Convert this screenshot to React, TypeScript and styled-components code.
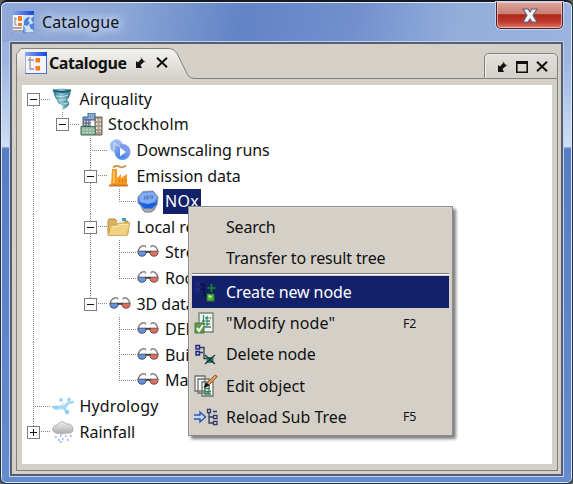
import React from "react";
import styled, { createGlobalStyle, css } from "styled-components";

const Global = createGlobalStyle`
  * { box-sizing: border-box; }
  body { margin: 0; background: #5c615f; overflow: hidden; font-family: "Noto Sans", "Open Sans", sans-serif; font-size: 16px; color: #111; }
  svg { display: block; flex: none; }
`;

const Window = styled.div`
  position: relative;
  width: 573px;
  height: 484px;
  padding: 2px 9px 7px 9px;
  display: flex;
  flex-direction: column;
  border: 1px solid #27303e;
  border-top: 2px solid #16191f;
  border-radius: 7px 7px 6px 6px;
  background: linear-gradient(100deg, #91a9d7 0%, #8ba5d6 22%, #6283c5 42%, #7390cd 62%, #94aedb 80%, #9ab4df 100%) 0 0 / 100% 40px no-repeat,
    linear-gradient(180deg, #95aedb 0%, #9db5df 12%, #cfdef4 30%, #577dc4 30.5%, #648bcd 100%);
  box-shadow: inset 0 0 0 1px #d9e8fa;
`;

const TitleBar = styled.div`
  height: 38px;
  flex: none;
  display: flex;
  align-items: flex-start;
  padding-left: 2px;
`;

const TitleIcon = styled.div`
  margin-top: 7px;
`;

const Title = styled.div`
  margin: 7px 0 0 8px;
  line-height: 22px;
  letter-spacing: 0.12px;
  text-shadow: 0 0 8px #c8d8f2, 0 0 8px #c8d8f2, 0 0 12px #c8d8f2, 0 0 14px #c8d8f2;
`;

const CloseButton = styled.button`
  margin: -2px 0 0 auto;
  width: 67px;
  height: 27px;
  padding: 0;
  display: flex;
  align-items: center;
  justify-content: center;
  border: 1px solid #4b2029;
  border-top: 0;
  border-radius: 0 0 5px 5px;
  background: linear-gradient(180deg, #dba79e 0%, #cb7d72 45%, #ae251c 49%, #bd392e 75%, #df7866 100%);
  box-shadow: inset 0 0 0 1px rgba(255, 220, 210, 0.65), 0 0 0 1px #c3d5f1;
`;

const Client = styled.div`
  flex: 1;
  min-height: 0;
  padding: 4px 3px 3px 4px;
  border: 2px solid #565e70;
  outline: 1px solid #bdd2ef;
  display: flex;
  flex-direction: column;
  background: #d4d0c8;
`;

const TabStrip = styled.div`
  height: 31px;
  flex: none;
  display: flex;
  justify-content: space-between;
`;

const Tab = styled.div`
  width: 180px;
  display: grid;
  & > * { grid-area: 1 / 1; }
`;

const TabContent = styled.div`
  z-index: 1;
  display: flex;
  align-items: center;
  padding: 0 0 2px 9px;
`;

const TabLabel = styled.span`
  font-weight: 700;
  line-height: 22px;
  width: 79px;
  margin: 0 7px 0 2px;
  letter-spacing: -0.4px;
  white-space: nowrap;
`;

const TabFill = styled.div`
  flex: 1;
  border-bottom: 1px solid #808080;
`;

const TabTools = styled.div`
  margin-top: 5px;
  width: 74px;
  border: 1px solid #808080;
  border-radius: 5px 5px 0 0;
  background: linear-gradient(#e2e0dc, #d4d0c8);
  box-shadow: inset 1px 1px 0 #efedea;
  display: flex;
  align-items: center;
  justify-content: space-between;
  padding: 1px 9px 0 12px;
`;

const TabButtonGap = styled.span`
  width: 10px;
  flex: none;
`;

const TabBody = styled.div`
  flex: 1;
  min-height: 0;
  padding: 6px 5px 6px 5px;
  border: 1px solid #808080;
  border-top: 0;
  display: flex;
`;

const Tree = styled.div`
  flex: 1;
  background: #fff;
  padding-top: 1.5px;
`;

const TreeRow = styled.div`
  height: 25.6px;
  display: flex;
  align-items: center;
`;

type Guide = "blank" | "line" | "tee" | "elbow" | "first" | "boxMid" | "boxLast";

const vdots = "repeating-linear-gradient(180deg, #858585 0 1px, #fff 1px 2px)";
const hdots = "repeating-linear-gradient(90deg, #858585 0 1px, #fff 1px 2px)";
const guides: Record<Guide, string> = {
  blank: "none",
  line: `${vdots} 11px 0 / 1px 100% no-repeat`,
  tee: `${vdots} 11px 0 / 1px 100% no-repeat, ${hdots} 11px 12px / 18px 1px no-repeat`,
  elbow: `${vdots} 11px 0 / 1px 13px no-repeat, ${hdots} 11px 12px / 18px 1px no-repeat`,
  first: `${vdots} 11px 13px / 1px 100% no-repeat, ${hdots} 11px 12px / 17px 1px no-repeat`,
  boxMid: `${vdots} 11px 0 / 1px 100% no-repeat, ${hdots} 11px 12px / 17px 1px no-repeat`,
  boxLast: `${vdots} 11px 0 / 1px 13px no-repeat, ${hdots} 11px 12px / 17px 1px no-repeat`,
};

const GuideCell = styled.div<{ $kind: Guide }>`
  width: 28.5px;
  height: 100%;
  flex: none;
  display: flex;
  align-items: center;
  padding-left: 5px;
  background: ${(p) => guides[p.$kind]};
`;

const Expander = styled.div<{ $open: boolean }>`
  width: 13px;
  height: 13px;
  border: 1px solid #7d7d7d;
  background: ${(p) =>
    `linear-gradient(#111, #111) 2px 5px / 7px 1.4px no-repeat, ${
      p.$open ? "" : "linear-gradient(#111, #111) 5px 2px / 1.4px 7px no-repeat, "
    }#fff`};
`;

const NodeIcon = styled.div`
  width: 28px;
  flex: none;
  display: flex;
  padding-left: 1px;
`;

const NodeLabel = styled.span<{ $selected?: boolean; $track: number }>`
  line-height: 25px;
  white-space: nowrap;
  letter-spacing: ${(p) => p.$track}px;
  margin-left: -1px;
  padding: 0 2px;
  ${(p) =>
    p.$selected &&
    css`
      background: #13216b;
      color: #fff;
    `}
`;

const Menu = styled.div`
  position: absolute;
  left: 187px;
  top: 204px;
  width: 265px;
  height: 230px;
  padding: 4px 3px 0 3px;
  border: 1px solid #8a8a86;
  background: #d4d0c8;
  box-shadow: inset 1px 1px 0 #dedbd5, 3px 3px 3px rgba(0, 0, 0, 0.5);
`;

const MenuItem = styled.div<{ $active?: boolean }>`
  height: 31.2px;
  display: grid;
  grid-template-columns: 34px 177px 1fr;
  align-items: center;
  background: ${(p) => (p.$active ? "#13216b" : "transparent")};
  color: ${(p) => (p.$active ? "#fff" : "#111")};
`;

const MenuIcon = styled.div`
  padding-left: 2px;
`;

const MenuLabel = styled.span<{ $track: number }>`
  white-space: nowrap;
  letter-spacing: ${(p) => p.$track}px;
`;

const Shortcut = styled.span`
  font-size: 12.5px;
  letter-spacing: -0.3px;
`;

const Separator = styled.div`
  height: 2px;
  margin: 0 0 1px;
  border-top: 1px solid #808080;
  border-bottom: 1px solid #fff;
`;

const CatalogueIcon = ({ world = false }: { world?: boolean }) => (
  <svg width="22" height="22" viewBox="0 0 22 22">
    <defs>
      <linearGradient id="cap"><stop stopColor="#8ca5ed" /><stop offset="1" stopColor="#1546df" /></linearGradient>
    </defs>
    <path d="M0 0H22V22H0Z" fill="#f4f3fa" />
    <path d="M0 0H22V4H0Z" fill="url(#cap)" />
    {world ? (
      <>
        <path d="M3 6v8h2M3 8h2" fill="none" stroke="#979797" strokeWidth="1.2" />
        <path d="M6 5h4v5H6zM6 12h4v3H6z" fill="#f57b1c" />
        <rect x="11" y="4" width="11" height="18" fill="#cfe0f7" />
        <path d="M12 10q2-4 6-4l-2 4 2 2-3 3-3-1zM19 7l3-1v4l-2 1zM17 14l5-2v7l-3-1z" fill="#4a83d6" />
        <path d="M11 14l3 4-1 4h-2z" fill="#78a4e4" />
        <path d="M1 17h9M1 20h11" stroke="#555a68" strokeWidth="1.2" />
      </>
    ) : (
      <>
        <path d="M3 8h6M5 5v12h4" fill="none" stroke="#979797" strokeWidth="1.3" />
        <path d="M10.500 6h4.500v4.500h-4.500zM10.500 14h4.500v4.500h-4.500z" fill="#f57b1c" />
      </>
    )}
    <path d="M.5 4V22" stroke="#a3afe1" />
    <path d="M21.5 4v18M0 21.5h22" stroke="#4a6bd0" strokeWidth={world ? 0.5 : 1} />
  </svg>
);

const PinIcon = () => (
  <svg width="11" height="12" viewBox="0 0 11 12">
    <path d="M1 4l2 1.500 3.500-4 3 3-4 3.500 1.500 3H1z" fill="#111" />
    <path d="M6 .5l2 3 2.500 1.500" fill="none" stroke="#666" />
  </svg>
);

const CrossIcon = () => (
  <svg width="12" height="11" viewBox="0 0 12 11">
    <path d="M1 .8l10 9.4M11 .8L1 10.2" stroke="#111" strokeWidth="2" />
  </svg>
);

const MaximizeIcon = () => (
  <svg width="12" height="12" viewBox="0 0 12 12">
    <path d="M.8 1h10.400v10.200H.8z" fill="none" stroke="#111" strokeWidth="1.600" />
    <path d="M0 1.500h12" stroke="#111" strokeWidth="3" />
  </svg>
);

const CloseGlyph = () => (
  <svg width="16" height="15" viewBox="0 0 16 15">
    <path d="M1 1h5l2 3 2-3h5l-4 6.3L15 14h-5l-2-3-2 3H1l4-6.7z" fill="#f5f5f6" stroke="#5b6380" strokeWidth="1.1" />
  </svg>
);

const Tornado = () => (
  <svg width="20" height="22" viewBox="0 0 20 22">
    <defs><linearGradient id="funnel"><stop stopColor="#2d7189" /><stop offset=".45" stopColor="#8cc3d0" /><stop offset="1" stopColor="#2e748c" /></linearGradient></defs>
    <path d="M1 2Q10-1 19 2l-1 5q-1 4-3 5 3 2 2 5-2 3-7 5 2-3 0-5-5-1-5-5-3-3-4-10z" fill="url(#funnel)" />
    <path d="M4 8q7 2 12-1M6 12q5 1 8-1M11 16q3 0 5-1" fill="none" stroke="#c3e3e9" strokeWidth="1" />
    <path d="M1 2q9 4 18 0" fill="none" stroke="#17576e" strokeWidth="1.8" />
  </svg>
);

const City = () => (
  <svg width="23" height="23" viewBox="0 0 23 23">
    <path d="M3 4h5V0h7v7h-5v8H3z" fill="#789dce" stroke="#385f8d" />
    <path d="M9 2h5M9 5h5" stroke="#c0dbf6" strokeDasharray="1 1" />
    <path d="M3 6h8v8H3z" fill="#666f83" />
    <path d="M4 8.500h7M4 11.500h7" stroke="#d5dce3" strokeDasharray="1.4 1.4" strokeWidth="1.4" />
    <path d="M15 4h7v18h-7z" fill="#aa9d8e" stroke="#696158" />
    <path d="M16.8 6v13M20.2 6v13" stroke="#eee4d4" strokeDasharray="2 2" strokeWidth="1.5" />
    <path d="M1 13.5h14v8.500H1z" fill="#8cb49a" stroke="#3f6b50" />
    <path d="M2.500 16.500h12M2.500 19.500h12" stroke="#c4e0cc" strokeDasharray="2 1.4" strokeWidth="1.5" />
  </svg>
);

const Downscale = () => (
  <svg width="22" height="22" viewBox="0 0 22 22">
    <defs><radialGradient id="run" cx=".4" cy=".75"><stop stopColor="#3c83f0" /><stop offset="1" stopColor="#7b9ce8" /></radialGradient></defs>
    <circle cx="7.500" cy="7" r="6.500" fill="#94b8ee" stroke="#bdd3f4" />
    <circle cx="13.5" cy="13" r="8" fill="url(#run)" />
    <path d="M5 3.500v8M5 4l6 3.500" stroke="#d2e2fa" strokeWidth="1.4" opacity=".8" />
    <path d="M11 8.5l6 4.5-6 4.5z" fill="#f2f8ff" />
  </svg>
);

const Factory = () => (
  <svg width="20" height="22" viewBox="0 0 20 22">
    <path d="M4 2.500q3-3 6-1t7-1" fill="none" stroke="#cf934c" strokeWidth="1.800" />
    <path d="M3 4h5v9l4-4v4l6-4v11H2z" fill="#fa9b20" />
    <path d="M5 6v12" stroke="#ffc878" strokeWidth="1.500" />
    <path d="M10.500 17v-3M13.500 17v-3M16.500 17v-3" stroke="#e77a0c" strokeWidth="1.2" />
    <path d="M0 20.5h19" stroke="#c87922" strokeWidth="2" />
  </svg>
);

const Globe = () => (
  <svg width="22" height="23" viewBox="0 0 22 23">
    <path d="M3 14l3 6 2 2h6l3-2 3-6z" fill="#aeb2b7" stroke="#70757d" />
    <path d="M6 1.500L16 1l5 6-1 8-5 4H7l-6-6V7z" fill="#2f71e0" stroke="#8a95a8" />
    <path d="M6 2.500L16 2l4 5-2 5-7 2-8-2-1-5z" fill="#84acee" />
    <path d="M3 13q8 3 16-1l-1 3-4 3H8z" fill="#155ee0" />
    <path d="M7 10l1-4 3 0-1 4M12 6h4l-1 3M8 8h7" fill="none" stroke="#4b79ca" />
  </svg>
);

const Folder = () => (
  <svg width="24" height="21" viewBox="0 0 24 21">
    <path d="M1 4l1-2h6l2 2h11v13H1z" fill="#d9b15e" stroke="#b98a36" />
    <path d="M10 1h7v5h-7z" fill="#edf7ff" /><path d="M15 1h4v3h-4z" fill="#459fc1" />
    <path d="M1 18.500L4 8.500l6-.5 2-2h11l-3 12.500z" fill="#eed183" stroke="#d3a958" />
    <path d="M5 9.500h5.500l2-2H21" stroke="#f8e7b1" fill="none" />
  </svg>
);

const FolderIcon = styled.div`
  margin-left: -2px;
`;

const GlassesIcon = styled.div`
  margin-top: -2px;
`;

const Glasses = () => (
  <svg width="22" height="13" viewBox="0 0 22 13">
    <path d="M1 7Q2 2 5.500 1t3 1.500M21 7Q20 2 17 1t-3 1.500" fill="none" stroke="#858585" strokeWidth="1.4" />
    <path d="M1 6.200h8q.5 5-4 5T1 6.200z" fill="#6292e2" stroke="#4c5260" />
    <path d="M13 6.200h8q.5 5-4 5t-4-5z" fill="#e16d5b" stroke="#6b5656" />
    <path d="M8.500 6.800h5" fill="none" stroke="#414141" strokeWidth="2" />
  </svg>
);

const Hydro = () => (
  <svg width="22" height="18" viewBox="0 0 22 18">
    <path d="M1 10l7 0 3-5 1 5 7-6-5 8 4 3-6-2-5 0-6-1z" fill="#c2e7fb" />
    <path d="M1 10l7 0 4 0 4-4 5-1M12 10l3 6" stroke="#a2d8f6" strokeWidth="2.5" fill="none" strokeLinecap="round" />
    <circle cx="9" cy="3" r="2" fill="#9bd7f7" /><circle cx="17" cy="2.500" r="2" fill="#9bd7f7" />
    <circle cx="15" cy="15" r="2.300" fill="#8fd0f6" /><circle cx="4" cy="10.500" r="2" fill="#8fd0f6" />
  </svg>
);

const Rain = () => (
  <svg width="22" height="22" viewBox="0 0 22 22">
    <defs><linearGradient id="cloud" x2="0" y2="1"><stop stopColor="#f1f1f1" /><stop offset="1" stopColor="#aaa" /></linearGradient></defs>
    <path d="M4 12q-4-1-3-5 1-3 4-3 5-6 9-1 6-1 7 5 1 5-7 4-4 2-10 0z" fill="url(#cloud)" stroke="#b2b2b2" />
    <path d="M4 15l-.5 2M9 14l-.5 2M14 14l-.5 2M19 14l-.5 2M7 18l-.5 2M11 17l-.5 2M9 20l-.5 2M16 18l-.5 2" stroke="#a3b3f2" strokeWidth="1.6" />
  </svg>
);

const NodeGlyph = ({ dark = false }: { dark?: boolean }) => (
  <svg width="22" height="21" viewBox="0 0 22 21">
    <path d="M6 3.500h4v11h4M6 8.500h3" fill="none" stroke={dark ? "#090e3b" : "#323a55"} strokeWidth="1.3" />
    <path d="M2 1.500h3.500v3.500H2zM2 7.500h3.500v3.500H2z" fill={dark ? "#1b2470" : "#c9c9de"} stroke={dark ? "#222a80" : "#26267a"} strokeWidth="1.4" />
    {dark ? (
      <>
        <path d="M17.500 3v8M13.500 7h8" stroke="#178b23" strokeWidth="1.7" />
        <path d="M13 13h7v7h-7z" fill="#57ad3d" stroke="#267822" />
        <path d="M14.500 15l3 1" stroke="#baf296" strokeWidth="2" />
      </>
    ) : (
      <>
        <path d="M12.500 13h7v6h-7z" fill="#2b8447" />
        <path d="M11 11l10 9M21 11l-10 9" stroke="#173553" strokeWidth="1.3" />
      </>
    )}
  </svg>
);

const ModifyGlyph = () => (
  <svg width="22" height="23" viewBox="0 0 22 23">
    <path d="M5 1h14v19H5z" fill="#eff5ec" stroke="#758777" strokeWidth="1.4" />
    <path d="M11 6h6M8 9h9M8 12h9M9 15h8" stroke="#45806d" strokeWidth="1.4" strokeDasharray="3.500 1" />
    <path d="M9.500 3v8M13 4v12" stroke="#3c8a7e" strokeWidth="1.300" />
    <path d="M1 11h9v10H1z" fill="#5f9c4c" stroke="#467d38" /><path d="M3 16l2 3 4-6" fill="none" stroke="white" strokeWidth="2" />
  </svg>
);

const EditGlyph = () => (
  <svg width="24" height="24" viewBox="0 0 24 24">
    <path d="M1 2h10v15H1zM4 5h11v14H4zM8 8h11v14H8z" fill="#f8f8f4" stroke="#6c706f" strokeWidth="1.3" />
    <path d="M10 14.500h6M10 17.500h7M10 20h7" stroke="#31885f" strokeWidth="1.3" />
    <path d="M11 13l2-4L21 1l2.500 1.500-8 8z" fill="#e79b5b" stroke="#8f5a35" /><path d="M9.500 14l2.500-5.500 4 3z" fill="#111" />
  </svg>
);

const ReloadGlyph = () => (
  <svg width="24" height="18" viewBox="0 0 24 18">
    <path d="M0 7h6V4l5.500 5L6 14v-3H0" fill="#c4dcfc" stroke="#3052ad" strokeWidth="1.4" />
    <path d="M15 4v11h5M15 9h5" fill="none" stroke="#343856" strokeWidth="1.3" />
    <path d="M13.500 1.500h3v3h-3zM19 3.500h4M19.500 7.500h3.500v3h-3.500zM19.500 13.500h3.500v3h-3.500z" fill="#eee" stroke="#323872" strokeWidth="1.3" />
  </svg>
);

interface NodeData { label: string; cells: Guide[]; icon: React.ReactNode; selected?: boolean; closed?: boolean; track?: number }

const folder = <FolderIcon><Folder /></FolderIcon>;
const glasses = <GlassesIcon><Glasses /></GlassesIcon>;

const nodes: NodeData[] = [
  { label: "Airquality", cells: ["first"], icon: <Tornado />, track: 0.1 },
  { label: "Stockholm", cells: ["line", "boxLast"], icon: <City />, track: 0.2 },
  { label: "Downscaling runs", cells: ["line", "blank", "tee"], icon: <Downscale /> },
  { label: "Emission data", cells: ["line", "blank", "boxMid"], icon: <Factory /> },
  { label: "NOx", cells: ["line", "blank", "line", "elbow"], icon: <Globe />, selected: true, track: 0.3 },
  { label: "Local results", cells: ["line", "blank", "boxMid"], icon: folder },
  { label: "Street", cells: ["line", "blank", "line", "tee"], icon: glasses },
  { label: "Roof", cells: ["line", "blank", "line", "elbow"], icon: glasses },
  { label: "3D data", cells: ["line", "blank", "boxLast"], icon: glasses },
  { label: "DEM", cells: ["line", "blank", "blank", "tee"], icon: glasses },
  { label: "Buildings", cells: ["line", "blank", "blank", "tee"], icon: glasses },
  { label: "Map", cells: ["line", "blank", "blank", "elbow"], icon: glasses },
  { label: "Hydrology", cells: ["tee"], icon: <Hydro />, track: 0.15 },
  { label: "Rainfall", cells: ["boxLast"], icon: <Rain />, closed: true, track: 0 },
];

const isBox = (g: Guide) => g === "first" || g === "boxMid" || g === "boxLast";

const commands = [
  { label: "Create new node", icon: <NodeGlyph dark />, key: "", active: true, track: -0.1 },
  { label: "\"Modify node\"", icon: <ModifyGlyph />, key: "F2", track: 0.15 },
  { label: "Delete node", icon: <NodeGlyph />, key: "", track: -0.15 },
  { label: "Edit object", icon: <EditGlyph />, key: "", track: 0 },
  { label: "Reload Sub Tree", icon: <ReloadGlyph />, key: "F5", track: 0 },
];

export default function App() {
  return (
    <>
      <Global />
      <Window>
        <TitleBar>
          <TitleIcon><CatalogueIcon world /></TitleIcon>
          <Title>Catalogue</Title>
          <CloseButton aria-label="Close"><CloseGlyph /></CloseButton>
        </TitleBar>
        <Client>
          <TabStrip>
            <Tab>
              <svg width="180" height="31" viewBox="0 0 180 31">
                <defs><linearGradient id="tab" x2="0" y2="1"><stop stopColor="#f4f3f1" /><stop offset="1" stopColor="#d5d1c9" /></linearGradient></defs>
                <path d="M.5 31V6L5 .5h147q6 0 9 5l10 20q2 5 9 5V31z" fill="url(#tab)" />
                <path d="M.5 31V6L5 .5h147q6 0 9 5l10 20q2 5 9 5" fill="none" stroke="#808080" />
              </svg>
              <TabContent>
                <CatalogueIcon />
                <TabLabel>Catalogue</TabLabel>
                <PinIcon />
                <TabButtonGap />
                <CrossIcon />
              </TabContent>
            </Tab>
            <TabFill />
            <TabTools><PinIcon /><MaximizeIcon /><CrossIcon /></TabTools>
          </TabStrip>
          <TabBody>
            <Tree>
              {nodes.map((n) => (
                <TreeRow key={n.label}>
                  {n.cells.map((g, i) => (
                    <GuideCell key={i} $kind={g}>{isBox(g) && <Expander $open={!n.closed} />}</GuideCell>
                  ))}
                  <NodeIcon>{n.icon}</NodeIcon>
                  <NodeLabel $selected={n.selected} $track={n.track ?? -0.05}>{n.label}</NodeLabel>
                </TreeRow>
              ))}
            </Tree>
          </TabBody>
        </Client>
        <Menu>
          <MenuItem><MenuIcon /><MenuLabel $track={-0.2}>Search</MenuLabel></MenuItem>
          <MenuItem><MenuIcon /><MenuLabel $track={-0.15}>Transfer to result tree</MenuLabel></MenuItem>
          <Separator />
          {commands.map((c) => (
            <MenuItem key={c.label} $active={c.active}>
              <MenuIcon>{c.icon}</MenuIcon>
              <MenuLabel $track={c.track}>{c.label}</MenuLabel>
              <Shortcut>{c.key}</Shortcut>
            </MenuItem>
          ))}
        </Menu>
      </Window>
    </>
  );
}
